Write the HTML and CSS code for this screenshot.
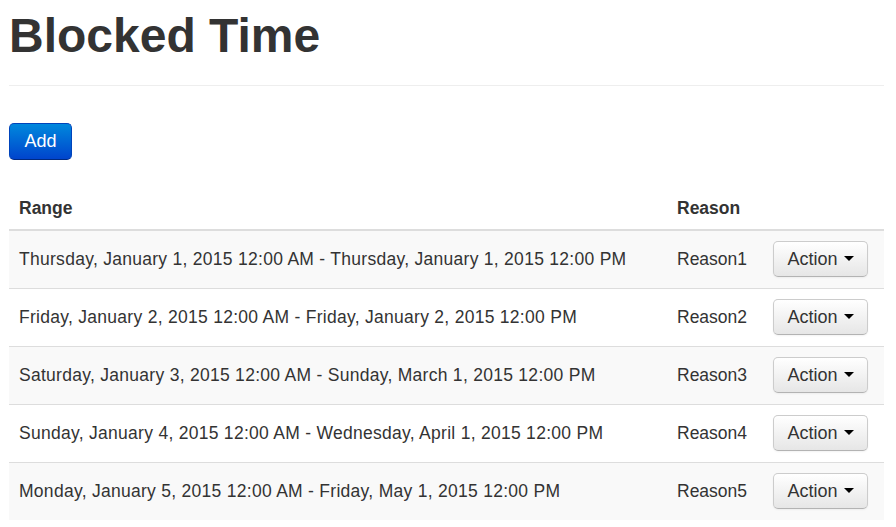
FILE: index.html
```html
<!DOCTYPE html>
<html>
<head>
<meta charset="utf-8">
<link rel="stylesheet" href="styles.css">
</head>
<body>
<div class="page">
  <h1 class="title">Blocked Time</h1>
  <hr class="rule">
  <div class="toolbar"><button class="btn btn-primary">Add</button></div>
  <table class="table">
    <thead>
      <tr><th class="col-range">Range</th><th class="col-reason">Reason</th><th class="col-action"></th></tr>
    </thead>
    <tbody>
      <tr><td class="range">Thursday, January 1, 2015 12:00 AM - Thursday, January 1, 2015 12:00 PM</td><td>Reason1</td><td><button class="btn btn-default">Action <span class="caret"></span></button></td></tr>
      <tr><td class="range">Friday, January 2, 2015 12:00 AM - Friday, January 2, 2015 12:00 PM</td><td>Reason2</td><td><button class="btn btn-default">Action <span class="caret"></span></button></td></tr>
      <tr><td class="range">Saturday, January 3, 2015 12:00 AM - Sunday, March 1, 2015 12:00 PM</td><td>Reason3</td><td><button class="btn btn-default">Action <span class="caret"></span></button></td></tr>
      <tr><td class="range">Sunday, January 4, 2015 12:00 AM - Wednesday, April 1, 2015 12:00 PM</td><td>Reason4</td><td><button class="btn btn-default">Action <span class="caret"></span></button></td></tr>
      <tr><td class="range">Monday, January 5, 2015 12:00 AM - Friday, May 1, 2015 12:00 PM</td><td>Reason5</td><td><button class="btn btn-default">Action <span class="caret"></span></button></td></tr>
    </tbody>
  </table>
</div>
</body>
</html>
```
FILE: styles.css
```css
html, body {
  margin: 0;
  padding: 0;
  background: #fff;
}
body {
  font-family: "Liberation Sans", Arial, sans-serif;
  font-size: 17.5px;
  line-height: 25px;
  color: #333;
}
.page {
  padding: 0 12px 0 9px;
}
.title {
  margin: 0;
  padding-top: 10px;
  font-size: 48px;
  line-height: 52px;
  font-weight: bold;
  color: #333;
}
.rule {
  margin: 23px 0 0 0;
  border: 0;
  border-top: 1px solid #eee;
  height: 0;
}
.toolbar {
  margin-top: 37px;
}
.btn {
  font-family: "Liberation Sans", Arial, sans-serif;
  font-size: 18px;
  line-height: 25px;
  border-radius: 5px;
  cursor: pointer;
}
.btn-primary {
  color: #fff;
  height: 37px;
  width: 63px;
  padding: 0;
  background: linear-gradient(to bottom, #0088dd, #0044cc);
  border: 1px solid #0044bb;
  border-bottom-color: #002a80;
}
.btn-default {
  color: #333;
  height: 36px;
  width: 95px;
  padding: 0;
  background: linear-gradient(to bottom, #ffffff, #e6e6e6);
  border: 1px solid #ccc;
  border-bottom-color: #b3b3b3;
  box-shadow: inset 0 1px 0 rgba(255,255,255,0.2), 0 1px 2px rgba(0,0,0,0.05);
}
.caret {
  display: inline-block;
  width: 0;
  height: 0;
  vertical-align: middle;
  margin-left: 1px;
  margin-top: -3px;
  border-top: 5px solid #000;
  border-left: 5px solid transparent;
  border-right: 5px solid transparent;
}
.table {
  width: 875px;
  margin-top: 26px;
  border-collapse: collapse;
  border-spacing: 0;
}
.table th {
  text-align: left;
  font-weight: bold;
  padding: 10px 10px 8px 10px;
  vertical-align: bottom;
  border-bottom: 2px solid #ddd;
}
.table td {
  padding: 10px 10px 11px 10px;
  vertical-align: middle;
  border-top: 1px solid #ddd;
  height: 36px;
}
.table td.range {
  letter-spacing: 0.28px;
}
.table tbody tr:nth-child(odd) td {
  background: #f9f9f9;
}
.col-range { width: 638px; }
.col-reason { width: 76px; }
```
